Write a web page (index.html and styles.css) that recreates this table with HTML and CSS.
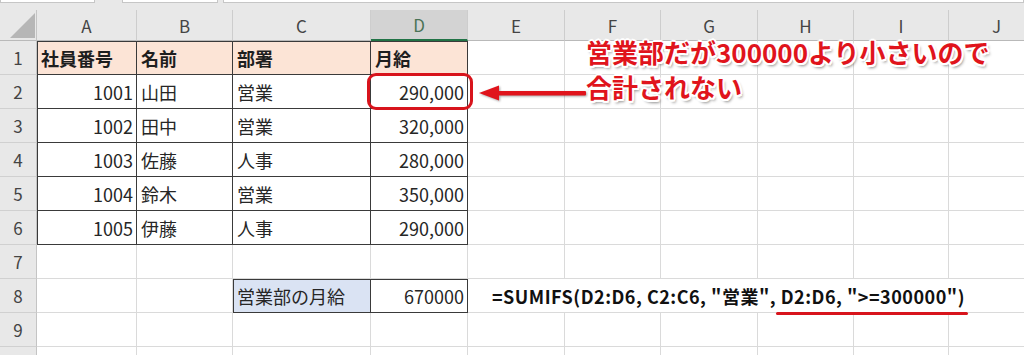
FILE: index.html
```html
<!DOCTYPE html>
<html lang="ja">
<head>
<meta charset="utf-8">
<title>SUMIFS</title>
<link rel="stylesheet" href="styles.css">
</head>
<body>
<div class="topbar">
  <span class="fbox name"></span>
  <span class="fbox mid"></span>
  <span class="fbox fx"></span>
</div>
<div class="sheet">
  <div class="c corner"></div>
  <div class="c ch">A</div><div class="c ch">B</div><div class="c ch">C</div><div class="c ch sel">D</div><div class="c ch">E</div><div class="c ch">F</div><div class="c ch">G</div><div class="c ch">H</div><div class="c ch">I</div><div class="c ch">J</div>

  <div class="c rh">1</div>
  <div class="c t head lt">社員番号</div><div class="c t head tp">名前</div><div class="c t head tp">部署</div><div class="c t head tp">月給</div>
  <div class="c"></div><div class="c"></div><div class="c"></div><div class="c"></div><div class="c"></div><div class="c"></div>

  <div class="c rh">2</div>
  <div class="c t num lf">1001</div><div class="c t">山田</div><div class="c t">営業</div><div class="c t num hit">290,000</div>
  <div class="c"></div><div class="c"></div><div class="c"></div><div class="c"></div><div class="c"></div><div class="c"></div>

  <div class="c rh">3</div>
  <div class="c t num lf">1002</div><div class="c t">田中</div><div class="c t">営業</div><div class="c t num">320,000</div>
  <div class="c"></div><div class="c"></div><div class="c"></div><div class="c"></div><div class="c"></div><div class="c"></div>

  <div class="c rh">4</div>
  <div class="c t num lf">1003</div><div class="c t">佐藤</div><div class="c t">人事</div><div class="c t num">280,000</div>
  <div class="c"></div><div class="c"></div><div class="c"></div><div class="c"></div><div class="c"></div><div class="c"></div>

  <div class="c rh">5</div>
  <div class="c t num lf">1004</div><div class="c t">鈴木</div><div class="c t">営業</div><div class="c t num">350,000</div>
  <div class="c"></div><div class="c"></div><div class="c"></div><div class="c"></div><div class="c"></div><div class="c"></div>

  <div class="c rh">6</div>
  <div class="c t num lf">1005</div><div class="c t">伊藤</div><div class="c t">人事</div><div class="c t num">290,000</div>
  <div class="c"></div><div class="c"></div><div class="c"></div><div class="c"></div><div class="c"></div><div class="c"></div>

  <div class="c rh">7</div>
  <div class="c"></div><div class="c"></div><div class="c"></div><div class="c"></div>
  <div class="c"></div><div class="c"></div><div class="c"></div><div class="c"></div><div class="c"></div><div class="c"></div>

  <div class="c rh">8</div>
  <div class="c"></div><div class="c"></div><div class="c t dept lt">営業部の月給</div><div class="c t num tp">670000</div>
  <div class="c formula"><span class="ftext">=SUMIFS(D2:D6, C2:C6, "営業", <span class="hl">D2:D6, "&gt;=300000")</span></span></div>

  <div class="c rh">9</div>
  <div class="c"></div><div class="c"></div><div class="c"></div><div class="c"></div>
  <div class="c"></div><div class="c"></div><div class="c"></div><div class="c"></div><div class="c"></div><div class="c"></div>

  <div class="c rh">10</div>
  <div class="c"></div><div class="c"></div><div class="c"></div><div class="c"></div>
  <div class="c"></div><div class="c"></div><div class="c"></div><div class="c"></div><div class="c"></div><div class="c"></div>

  <svg class="arrow" width="112" height="26" viewBox="0 0 112 26" aria-hidden="true">
    <rect x="16" y="11" width="92" height="4.5" rx="1" fill="#e0141c"/>
    <polygon points="1,13 21,5.5 21,20.5" fill="#e0141c"/>
  </svg>
  <div class="callout">営業部だが300000より小さいので<br>合計されない</div>
</div>
</body>
</html>
```

FILE: styles.css
```css
* {
  box-sizing: border-box;
  margin: 0;
  padding: 0;
}

html, body {
  width: 1024px;
  height: 355px;
  overflow: hidden;
}

body {
  background: #e8e8e8;
  font-family: "Noto Sans CJK JP", "Noto Sans", sans-serif;
  color: #262626;
}

.topbar {
  display: flex;
  align-items: flex-start;
  height: 10px;
}

.fbox {
  display: block;
  height: 3px;
  background: #fff;
  border: 1px solid #c6c6c6;
  border-top: none;
}

.fbox.name { width: 95px; }
.fbox.mid { width: 96px; margin-left: 27px; }
.fbox.fx { flex: 1; margin-left: 5px; }

.sheet {
  position: relative;
  display: grid;
  grid-template-columns: 37px 100px 96px 138px 97px 97px 96px 97px 96px 95px 96px;
  grid-template-rows: 31px repeat(10, 34px);
  width: 1045px;
  background: #fff;
}

.c {
  display: flex;
  align-items: center;
  border-right: 1px solid #dadada;
  border-bottom: 1px solid #dadada;
  padding: 0 4px;
  font-size: 18px;
  line-height: 1;
  white-space: nowrap;
}

.corner {
  position: relative;
  background: #e8e8e8;
  border-right: 1px solid #c4c4c4;
  border-bottom: 1px solid #b9b9b9;
}

.corner::after {
  content: "";
  position: absolute;
  right: 1px;
  bottom: 2px;
  width: 25px;
  height: 25px;
  background: #b6b6b6;
  clip-path: polygon(100% 0, 100% 100%, 0 100%);
}

.ch {
  justify-content: center;
  background: #e8e8e8;
  border-right: 1px solid #cdcdcd;
  border-bottom: 1px solid #b9b9b9;
  color: #444;
  font-size: 17px;
}

.ch.sel {
  background: #d3d3d3;
  border-bottom: 2px solid #217346;
  color: #4a7356;
}

.rh {
  justify-content: center;
  background: #e8e8e8;
  border-right: 1px solid #c4c4c4;
  border-bottom: 1px solid #d0d0d0;
  color: #444;
  font-size: 17px;
  padding: 0;
}

.num {
  justify-content: flex-end;
  padding-right: 3px;
}

.t {
  border-right-color: #3a3a3a;
  border-bottom-color: #3a3a3a;
}

.t.lf { box-shadow: inset 1px 0 0 #3a3a3a; }
.t.tp { box-shadow: inset 0 1px 0 #3a3a3a; }
.t.lt { box-shadow: inset 1px 1px 0 #3a3a3a; }

.head {
  background: #fce4d6;
  font-weight: 700;
  color: #1e1e1e;
}

.dept {
  background: #dae3f3;
}

.hit {
  position: relative;
}

.hit::after {
  content: "";
  position: absolute;
  left: -4px;
  right: -6px;
  top: -2px;
  bottom: -2px;
  border: 3px solid #d8141c;
  border-radius: 9px;
}

.formula {
  grid-column: span 6;
  padding-left: 24px;
  font-weight: 700;
  color: #111;
}

.ftext {
  letter-spacing: 0.5px;
}

.hl {
  position: relative;
}

.hl::after {
  content: "";
  position: absolute;
  left: -5px;
  right: -3px;
  bottom: -6px;
  height: 3px;
  border-radius: 2px;
  background: #d8141c;
}

.arrow {
  position: absolute;
  left: 478px;
  top: 70px;
  filter: drop-shadow(1px 1.5px 1px rgba(0, 0, 0, 0.35));
}

.callout {
  position: absolute;
  left: 586px;
  top: 24px;
  font-size: 26px;
  line-height: 35px;
  font-weight: 700;
  color: #e0141c;
  white-space: nowrap;
  text-shadow:
    2px 0 0 #fff, -2px 0 0 #fff, 0 2px 0 #fff, 0 -2px 0 #fff,
    1.5px 1.5px 0 #fff, -1.5px -1.5px 0 #fff, 1.5px -1.5px 0 #fff, -1.5px 1.5px 0 #fff,
    2px 3px 3px rgba(0, 0, 0, 0.45);
}
```
